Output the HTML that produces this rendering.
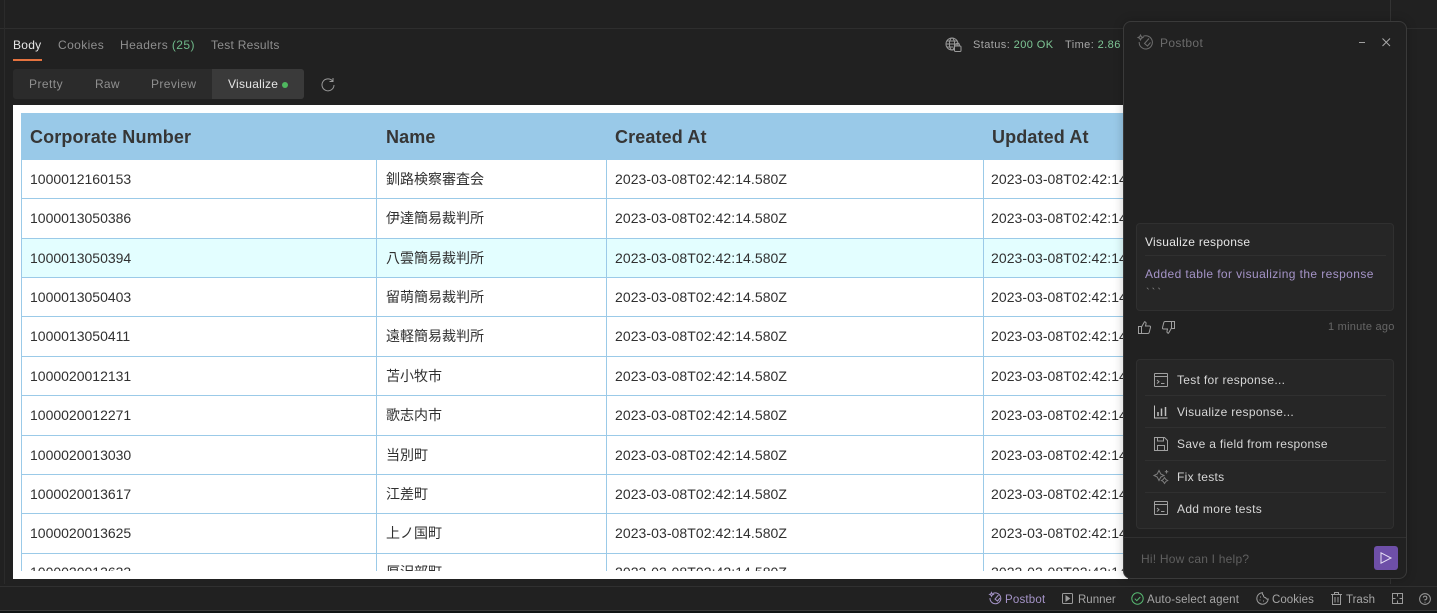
<!DOCTYPE html>
<html><head><meta charset="utf-8">
<style>
*{box-sizing:border-box;margin:0;padding:0}
html,body{width:1437px;height:613px;overflow:hidden;background:#212121;font-family:"Liberation Sans","Noto Sans CJK JP",sans-serif}
.a{position:absolute;white-space:nowrap}
.ui{font-size:12px;letter-spacing:.27px;line-height:16px}
.ln{position:absolute;background:#9bcae8}
.t{position:absolute;white-space:nowrap;font-size:14px;line-height:18px;color:#303030}
.d{letter-spacing:.065px}
.h{position:absolute;white-space:nowrap;font-size:18px;font-weight:bold;line-height:22px;color:#363636;top:126px;letter-spacing:.13px}
svg{position:absolute;overflow:visible;fill:none}
.menu{color:#d6d6d6;left:1177px;letter-spacing:.31px}
.sep{position:absolute;left:1145px;width:241px;height:1px;background:#303030}
.st{color:#a6a6a6;font-size:11.5px;top:592px;letter-spacing:.2px}
</style></head><body>
<div class="a" style="left:0;top:28px;width:1437px;height:1px;background:#2e2e2e"></div>
<div class="a" style="left:4px;top:0;width:1px;height:584px;background:#2b2b2b"></div>
<div class="a" style="left:1390px;top:0;width:1px;height:584px;background:#333"></div>

<div class="a ui" style="left:13px;top:37px;color:#e6e6e6">Body</div>
<div class="a" style="left:13px;top:59px;width:29px;height:2px;background:#e5733f"></div>
<div class="a ui" style="left:58px;top:37px;color:#8f8f8f;letter-spacing:.4px">Cookies</div>
<div class="a ui" style="left:120px;top:37px;color:#8f8f8f;letter-spacing:.4px">Headers <span style="color:#6fb98a">(25)</span></div>
<div class="a ui" style="left:211px;top:37px;color:#8f8f8f">Test Results</div>

<div class="a" style="left:13px;top:69px;width:291px;height:30px;background:#2b2b2b;border-radius:3px"></div>
<div class="a" style="left:212px;top:69px;width:92px;height:30px;background:#3a3a3a;border-radius:0 3px 3px 0"></div>
<div class="a ui" style="left:29px;top:76px;color:#8f8f8f;letter-spacing:.45px">Pretty</div>
<div class="a ui" style="left:95px;top:76px;color:#8f8f8f">Raw</div>
<div class="a ui" style="left:151px;top:76px;color:#8f8f8f;letter-spacing:.4px">Preview</div>
<div class="a ui" style="left:228px;top:76px;color:#e6e6e6">Visualize</div>
<div class="a" style="left:282px;top:82px;width:6px;height:6px;border-radius:50%;background:#4fb85f"></div>
<svg style="left:320px;top:77px" width="16" height="16" stroke="#9a9a9a" stroke-width="1"><path d="M12.6 4A6 6 0 1 0 14 8"/><path d="M13 1v3.5H9.5"/></svg>

<svg style="left:945px;top:37px" width="17" height="16" stroke="#9a9a9a" stroke-width="1"><circle cx="7" cy="7" r="6"/><ellipse cx="7" cy="7" rx="2.6" ry="6"/><path d="M1 7h12M2 4h10M2 10h6"/><rect x="9.5" y="9" width="6.5" height="5.5" rx="1" fill="#212121"/><path d="M11 9V7.8a1.7 1.7 0 0 1 3.4 0V9"/></svg>
<div class="a" style="left:973px;top:38px;font-size:11px;letter-spacing:.42px;line-height:14px;color:#a6a6a6">Status: <span style="color:#7fc796">200 OK</span></div>
<div class="a" style="left:1065px;top:38px;font-size:11px;letter-spacing:.42px;line-height:14px;color:#a6a6a6">Time: <span style="color:#7fc796">2.86</span></div>

<div class="a" style="left:13px;top:105px;width:1115px;height:474px;background:#fff"></div>

<div class="a" style="left:22px;top:239px;width:1106px;height:38px;background:#e3feff"></div>
<div class="a" style="left:21px;top:113px;width:1107px;height:47px;background:#99c9e8"></div>
<div class="ln" style="left:21px;top:160px;width:1px;height:411px"></div>
<div class="ln" style="left:376px;top:160px;width:1px;height:411px"></div>
<div class="ln" style="left:606px;top:160px;width:1px;height:411px"></div>
<div class="ln" style="left:983px;top:160px;width:1px;height:411px"></div>
<div class="ln" style="left:21px;top:198px;width:1107px;height:1px"></div>
<div class="ln" style="left:21px;top:238px;width:1107px;height:1px"></div>
<div class="ln" style="left:21px;top:277px;width:1107px;height:1px"></div>
<div class="ln" style="left:21px;top:316px;width:1107px;height:1px"></div>
<div class="ln" style="left:21px;top:356px;width:1107px;height:1px"></div>
<div class="ln" style="left:21px;top:395px;width:1107px;height:1px"></div>
<div class="ln" style="left:21px;top:435px;width:1107px;height:1px"></div>
<div class="ln" style="left:21px;top:474px;width:1107px;height:1px"></div>
<div class="ln" style="left:21px;top:513px;width:1107px;height:1px"></div>
<div class="ln" style="left:21px;top:553px;width:1107px;height:1px"></div>

<div class="h" style="left:30px">Corporate Number</div>
<div class="h" style="left:386px">Name</div>
<div class="h" style="left:615px">Created At</div>
<div class="h" style="left:992px">Updated At</div>

<div class="t" style="left:30px;top:170px">1000012160153</div><div class="t" style="left:386px;top:170px">釧路検察審査会</div><div class="t d" style="left:615px;top:170px">2023-03-08T02:42:14.580Z</div><div class="t d" style="left:991px;top:170px">2023-03-08T02:42:14.580Z</div>
<div class="t" style="left:30px;top:209px">1000013050386</div><div class="t" style="left:386px;top:209px">伊達簡易裁判所</div><div class="t d" style="left:615px;top:209px">2023-03-08T02:42:14.580Z</div><div class="t d" style="left:991px;top:209px">2023-03-08T02:42:14.580Z</div>
<div class="t" style="left:30px;top:249px">1000013050394</div><div class="t" style="left:386px;top:249px">八雲簡易裁判所</div><div class="t d" style="left:615px;top:249px">2023-03-08T02:42:14.580Z</div><div class="t d" style="left:991px;top:249px">2023-03-08T02:42:14.580Z</div>
<div class="t" style="left:30px;top:288px">1000013050403</div><div class="t" style="left:386px;top:288px">留萌簡易裁判所</div><div class="t d" style="left:615px;top:288px">2023-03-08T02:42:14.580Z</div><div class="t d" style="left:991px;top:288px">2023-03-08T02:42:14.580Z</div>
<div class="t" style="left:30px;top:327px">1000013050411</div><div class="t" style="left:386px;top:327px">遠軽簡易裁判所</div><div class="t d" style="left:615px;top:327px">2023-03-08T02:42:14.580Z</div><div class="t d" style="left:991px;top:327px">2023-03-08T02:42:14.580Z</div>
<div class="t" style="left:30px;top:367px">1000020012131</div><div class="t" style="left:386px;top:367px">苫小牧市</div><div class="t d" style="left:615px;top:367px">2023-03-08T02:42:14.580Z</div><div class="t d" style="left:991px;top:367px">2023-03-08T02:42:14.580Z</div>
<div class="t" style="left:30px;top:406px">1000020012271</div><div class="t" style="left:386px;top:406px">歌志内市</div><div class="t d" style="left:615px;top:406px">2023-03-08T02:42:14.580Z</div><div class="t d" style="left:991px;top:406px">2023-03-08T02:42:14.580Z</div>
<div class="t" style="left:30px;top:446px">1000020013030</div><div class="t" style="left:386px;top:446px">当別町</div><div class="t d" style="left:615px;top:446px">2023-03-08T02:42:14.580Z</div><div class="t d" style="left:991px;top:446px">2023-03-08T02:42:14.580Z</div>
<div class="t" style="left:30px;top:485px">1000020013617</div><div class="t" style="left:386px;top:485px">江差町</div><div class="t d" style="left:615px;top:485px">2023-03-08T02:42:14.580Z</div><div class="t d" style="left:991px;top:485px">2023-03-08T02:42:14.580Z</div>
<div class="t" style="left:30px;top:524px">1000020013625</div><div class="t" style="left:386px;top:524px">上ノ国町</div><div class="t d" style="left:615px;top:524px">2023-03-08T02:42:14.580Z</div><div class="t d" style="left:991px;top:524px">2023-03-08T02:42:14.580Z</div>
<div class="a" style="left:21px;top:560px;width:1107px;height:11px;overflow:hidden">
<div class="t" style="left:9px;top:3px">1000020013633</div><div class="t" style="left:365px;top:3px">厚沢部町</div><div class="t d" style="left:594px;top:3px">2023-03-08T02:42:14.580Z</div><div class="t d" style="left:970px;top:3px">2023-03-08T02:42:14.580Z</div>
</div>

<div class="a" style="left:1123px;top:21px;width:284px;height:558px;background:#212121;border:1px solid #3a3a3a;border-radius:8px;box-shadow:0 0 10px rgba(0,0,0,.22)"></div>
<svg style="left:1137px;top:34px" width="17" height="17" stroke="#6e6e6e" stroke-width="1"><path d="M6 2.4A6.6 6.6 0 1 1 2.2 8"/><path d="M12 4.5 7.5 9.5l3 2.5 3-3.5M3.5 1l.8 1.7L6 3.5l-1.7.8L3.5 6l-.8-1.7L1 3.5l1.700-.8z"/></svg>
<div class="a ui" style="left:1160px;top:35px;color:#6b6b6b;letter-spacing:.35px">Postbot</div>
<div class="a" style="left:1359px;top:42px;width:6px;height:1px;background:#a0a0a0"></div>
<svg style="left:1382px;top:38px" width="9" height="9" stroke="#a8a8a8" stroke-width="1"><path d="M.5.5l7.5 7.5M8 .5.5 8"/></svg>

<div class="a" style="left:1136px;top:223px;width:258px;height:88px;background:#262626;border:1px solid #303030;border-radius:4px"></div>
<div class="a ui" style="left:1145px;top:234px;color:#e6e6e6">Visualize response</div>
<div class="sep" style="top:255px"></div>
<div class="a ui" style="left:1145px;top:266px;color:#a594c8;letter-spacing:.4px">Added table for visualizing the response</div>
<div class="a" style="left:1146px;top:286px;font-size:11px;line-height:14px;letter-spacing:2px;color:#8a8a8a">&#96;&#96;&#96;</div>
<svg style="left:1138px;top:321px" width="13" height="13" stroke="#a0a0a0" stroke-width="1"><path d="M.5 5.5h3v7h-3zM3.500 6 6.500.8c1.200 0 1.800 1 1.500 2L7.500 5h4c.8 0 1.200.7 1 1.400l-1.300 5c-.2.7-.7 1.100-1.400 1.100H3.500"/></svg>
<svg style="left:1162px;top:321px" width="13" height="13" stroke="#a0a0a0" stroke-width="1"><path d="M12.500 7.500h-3v-7h3zM9.500 7 6.500 12.200c-1.200 0-1.800-1-1.500-2L5.500 8h-4c-.8 0-1.200-.7-1-1.400L1.800 1.600C2 .9 2.500.5 3.200.5h6.300"/></svg>
<div class="a" style="left:1328px;top:320px;font-size:11px;letter-spacing:.25px;line-height:14px;color:#666">1 minute ago</div>

<div class="a" style="left:1136px;top:359px;width:258px;height:170px;background:#262626;border:1px solid #303030;border-radius:4px"></div>
<svg style="left:1154px;top:373px" width="14" height="14" stroke="#a0a0a0" stroke-width="1"><rect x=".5" y=".5" width="13" height="13" rx=".5"/><path d="M.5 3.500h13M3 7l2 1.700L3 10.500M7 10.500h3.500"/></svg>
<div class="a ui menu" style="top:372px">Test for response...</div>
<div class="sep" style="top:395px"></div>
<svg style="left:1154px;top:405px" width="14" height="14" stroke="#c0c0c0" stroke-width="1"><path d="M.5.5v12.500h13"/><path d="M4 11V7M7.500 11V3.500M11.500 11V2" stroke-width="1.500"/></svg>
<div class="a ui menu" style="top:404px">Visualize response...</div>
<div class="sep" style="top:427px"></div>
<svg style="left:1154px;top:437px" width="14" height="14" stroke="#a0a0a0" stroke-width="1"><path d="M.5.5h10l3 3v10H.5z"/><path d="M3.500.5V4h6V.5M3.500 13.500V8.500h7v5"/></svg>
<div class="a ui menu" style="top:436px">Save a field from response</div>
<div class="sep" style="top:460px"></div>
<svg style="left:1154px;top:469px" width="15" height="15" stroke="#7d7d7d" stroke-width="1"><path d="M5 1.500 6.800 5 10 6.500 6.800 8 5 11.500 3.200 8 0 6.500 3.200 5zM10.500 8.500l1.400 2 1.800 1-1.800 1-1.400 2-1.300-2-1.800-1 1.800-1zM12.500 1v3.500M10.800 2.700h3.500"/></svg>
<div class="a ui menu" style="top:469px">Fix tests</div>
<div class="sep" style="top:492px"></div>
<svg style="left:1154px;top:501px" width="14" height="14" stroke="#a0a0a0" stroke-width="1"><rect x=".5" y=".5" width="13" height="13" rx=".5"/><path d="M.5 3.500h13M3 7l2 1.700L3 10.500M7 10.500h3.500"/></svg>
<div class="a ui menu" style="top:501px">Add more tests</div>

<div class="a" style="left:1124px;top:537px;width:282px;height:1px;background:#303030"></div>
<div class="a ui" style="left:1141px;top:551px;color:#5f5f5f;letter-spacing:.22px">Hi! How can I help?</div>
<div class="a" style="left:1374px;top:546px;width:24px;height:24px;border-radius:3px;background:#6e4fa8"></div>
<svg style="left:1380px;top:552px" width="12" height="12" stroke="#e8e0f5" stroke-width="1"><path d="M1 .8 11 6 1 11.200z"/></svg>

<div class="a" style="left:0;top:586px;width:1437px;height:1px;background:#303030"></div>
<div class="a" style="left:0;top:610px;width:1437px;height:1px;background:#3a3a3a"></div>
<div class="a" style="left:0;top:611px;width:1437px;height:2px;background:#101414"></div>
<svg style="left:989px;top:592px" width="13" height="13" stroke="#a594c8" stroke-width="1"><path d="M4 1.500A5.400 5.400 0 1 1 1 6"/><path d="M9.500 3 6 7l2.500 2 2.500-3M2.500.500l.6 1.300 1.300.6-1.300.6-.6 1.300-.6-1.300L.6 2.400l1.300-.6z"/></svg>
<div class="a ui st" style="left:1005px;color:#a594c8">Postbot</div>
<svg style="left:1062px;top:593px" width="11" height="11" stroke="#9a9a9a" stroke-width="1"><rect x=".5" y=".5" width="10" height="10" rx="1"/><path d="M4 3v5l3.500-2.500z" fill="#9a9a9a"/></svg>
<div class="a ui st" style="left:1078px;letter-spacing:0">Runner</div>
<svg style="left:1131px;top:592px" width="13" height="13" stroke="#57b872" stroke-width="1"><circle cx="6.500" cy="6.500" r="5.700"/><path d="M3.800 6.700l2 2 3.500-3.700"/></svg>
<div class="a ui st" style="left:1147px;letter-spacing:.15px">Auto-select agent</div>
<svg style="left:1256px;top:592px" width="13" height="13" stroke="#9a9a9a" stroke-width="1"><path d="M6.500.8A5.700 5.700 0 1 0 12.200 7c-1.200.3-2.200-.3-2.500-1.400C8.300 5.700 7.300 4.700 7.500 3.200 6.600 2.900 6.200 1.900 6.500.8z"/><path d="M4 5h1M3.500 8h1M7 9h1"/></svg>
<div class="a ui st" style="left:1272px;letter-spacing:.05px">Cookies</div>
<svg style="left:1331px;top:592px" width="11" height="13" stroke="#9a9a9a" stroke-width="1"><path d="M0 2.500h11M3.500 2.500V.500h4v2M1.500 2.500v10h8v-10M4 5v5.500M7 5v5.500"/></svg>
<div class="a ui st" style="left:1346px;letter-spacing:0">Trash</div>
<svg style="left:1392px;top:593px" width="11" height="11" stroke="#9a9a9a" stroke-width="1"><rect x=".5" y=".5" width="10" height="10"/><path d="M5.500.500v3M5.500 7.500v3M.5 5.500h3M7.500 5.500h3"/></svg>
<svg style="left:1419px;top:593px" width="12" height="12" stroke="#9a9a9a" stroke-width="1"><circle cx="6" cy="6" r="5.400"/><path d="M4.300 4.500A1.800 1.800 0 1 1 6 6.700v.8M6 8.800v1"/></svg>
</body></html>
